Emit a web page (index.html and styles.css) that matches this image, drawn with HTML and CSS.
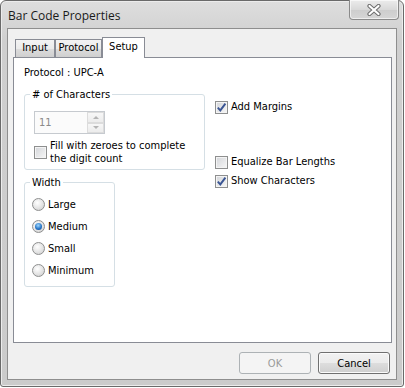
FILE: index.html
```html
<!DOCTYPE html>
<html lang="en">
<head>
  <meta charset="UTF-8">
  <title>Bar Code Properties</title>
  <link rel="stylesheet" href="styles.css">
</head>
<body>

<div class="window">
  <!-- タイトルバー -->
  <div class="titlebar">
    <span class="title">Bar Code Properties</span>
    <button type="button" class="close">
      <svg width="14" height="12" viewBox="0 0 14 12">
        <path d="M2.5 2 L11.5 10 M11.5 2 L2.5 10" stroke="#6d6d6d" stroke-width="4.2" stroke-linecap="round"/>
        <path d="M2.5 2 L11.5 10 M11.5 2 L2.5 10" stroke="#ffffff" stroke-width="2.2" stroke-linecap="round"/>
      </svg>
    </button>
  </div>

  <div class="client">
    <!-- タブ -->
    <div class="tabs">
      <div class="tab tab-input">Input</div>
      <div class="tab tab-protocol">Protocol</div>
      <div class="tab tab-setup active">Setup</div>
    </div>

    <div class="panel">
      <div class="protocol">Protocol : UPC-A</div>

      <div class="col-left">
        <fieldset class="group group-chars">
          <legend># of Characters</legend>
          <div class="spin">
            <span class="spin-value">11</span>
            <span class="spin-btns">
              <span class="spin-btn"><span class="arrow up"></span></span>
              <span class="spin-btn"><span class="arrow down"></span></span>
            </span>
          </div>
          <label class="check check-fill">
            <span class="box"></span>
            <span>Fill with zeroes to complete<br>the digit count</span>
          </label>
        </fieldset>

        <fieldset class="group group-width">
          <legend>Width</legend>
          <label class="radio"><span class="dot"></span>Large</label>
          <label class="radio"><span class="dot on"></span>Medium</label>
          <label class="radio"><span class="dot"></span>Small</label>
          <label class="radio"><span class="dot"></span>Minimum</label>
        </fieldset>
      </div>

      <div class="col-right">
        <label class="check row-margins">
          <span class="box checked"><svg width="11" height="11" viewBox="0 0 11 11"><path d="M1.8 5.6 L4.3 8.4 L9.4 1.6" fill="none" stroke="#3a5594" stroke-width="1.9"/></svg></span>
          Add Margins
        </label>
        <label class="check row-equalize">
          <span class="box"></span>
          Equalize Bar Lengths
        </label>
        <label class="check row-show">
          <span class="box checked"><svg width="11" height="11" viewBox="0 0 11 11"><path d="M1.8 5.6 L4.3 8.4 L9.4 1.6" fill="none" stroke="#3a5594" stroke-width="1.9"/></svg></span>
          Show Characters
        </label>
      </div>
    </div>

    <!-- ボタン -->
    <div class="actions">
      <button type="button" class="btn" disabled>OK</button>
      <button type="button" class="btn">Cancel</button>
    </div>
  </div>
</div>

</body>
</html>
```

FILE: styles.css
```css
/* 共通 */
body {
  margin: 0;
  background: #ffffff;
  font-family: "DejaVu Sans Condensed", "DejaVu Sans", sans-serif;
  font-stretch: condensed;
  font-size: 11px;
  color: #000000;
}

.window {
  width: 404px;
  height: 387px;
  box-sizing: border-box;
  border: 1px solid #6a6a6a;
  border-radius: 6px 6px 3px 3px;
  padding: 0 6px 6px;
  background: linear-gradient(#dedede, #cfcfcf 40px, #cbcbcb);
  box-shadow: inset 0 0 0 1px #ececec;
  display: flex;
  flex-direction: column;
}

/* タイトルバー */
.titlebar {
  height: 27px;
  margin: 0 -6px;
  display: flex;
  align-items: flex-start;
}

.title {
  font-family: "Open Sans", sans-serif;
  font-stretch: normal;
  font-size: 12px;
  line-height: 16px;
  padding: 7px 0 0 7px;
  color: #1a1a1a;
}

.close {
  margin: -1px 4px 0 auto;
  width: 50px;
  height: 20px;
  padding: 0;
  border: 1px solid #8a8a8a;
  border-top: none;
  border-radius: 0 0 4px 4px;
  background: linear-gradient(#ececec, #d9d9d9 50%, #cdcdcd 51%, #d6d6d6);
  box-shadow: inset 0 0 0 1px rgba(255, 255, 255, 0.6);
  display: flex;
  align-items: center;
  justify-content: center;
}

.client {
  flex: 1;
  border: 1px solid #8e8e8e;
  background: #f0f0f0;
  padding: 8px 4px 5px 5px;
  display: flex;
  flex-direction: column;
}

/* タブ */
.tabs {
  display: flex;
  align-items: flex-end;
  padding-left: 2px;
  height: 20px;
}

.tab {
  box-sizing: border-box;
  height: 18px;
  line-height: 16px;
  text-align: center;
  border: 1px solid #898c95;
  border-bottom: none;
  background: linear-gradient(#f3f3f3, #ebebeb 50%, #dddddd 51%, #cfcfcf);
}

.tab-input { width: 40px; }
.tab-protocol { width: 47px; }
.tab-setup { width: 43px; }

.tab.active {
  height: 21px;
  line-height: 18px;
  margin-bottom: -1px;
  background: #ffffff;
  position: relative;
  z-index: 1;
}

.panel {
  height: 286px;
  box-sizing: border-box;
  border: 1px solid #898c95;
  background: #ffffff;
  padding: 8px 10px 0;
  display: grid;
  grid-template-columns: 181px 1fr;
  grid-template-rows: 14px auto;
  column-gap: 10px;
  row-gap: 8px;
  align-content: start;
}

.protocol {
  grid-column: 1 / 3;
  line-height: 14px;
}

/* グループボックス */
.group {
  margin: 0;
  border: 1px solid #d5dfe5;
  border-radius: 3px;
  min-width: 0;
}

.group legend {
  padding: 0 2px;
  line-height: 13px;
}

.group-chars {
  padding: 10px 9px 4px;
}

.group-chars legend {
  margin-left: -4px;
}

.group-width {
  width: 91px;
  box-sizing: border-box;
  margin-top: 6px;
  padding: 4px 7px 5px;
}

.group-width legend {
  margin-left: -2px;
}

/* スピンボックス */
.spin {
  width: 71px;
  height: 23px;
  box-sizing: border-box;
  border: 1px solid #c6cacf;
  background: #fbfbfb;
  display: flex;
  justify-content: space-between;
}

.spin-value {
  padding-left: 4px;
  line-height: 21px;
  color: #8a8a8a;
}

.spin-btns {
  width: 17px;
  display: flex;
  flex-direction: column;
}

.spin-btn {
  flex: 1;
  border: 1px solid #dcdcdc;
  background: linear-gradient(#f7f7f7, #ececec);
  display: flex;
  align-items: center;
  justify-content: center;
}

.arrow {
  width: 0;
  height: 0;
  border-left: 3px solid transparent;
  border-right: 3px solid transparent;
}

.arrow.up { border-bottom: 3px solid #b4b4b4; }
.arrow.down { border-top: 3px solid #b4b4b4; }

/* チェックボックス */
.check {
  display: flex;
  align-items: center;
  gap: 3px;
  line-height: 14px;
}

.check-fill {
  margin-top: 5px;
  line-height: 13px;
}

.box {
  flex: none;
  width: 13px;
  height: 13px;
  box-sizing: border-box;
  border: 1px solid #8e8f8f;
  background: linear-gradient(135deg, #d3d5d9, #f7f7f7);
  box-shadow: inset 0 0 0 1px #f4f4f4;
  display: flex;
  align-items: center;
  justify-content: center;
}

.col-right {
  display: flex;
  flex-direction: column;
}

.row-margins { margin-top: 12px; }
.row-equalize { margin-top: 41px; }
.row-show { margin-top: 5px; }

/* ラジオボタン */
.radio {
  display: flex;
  align-items: center;
  gap: 3px;
  height: 22px;
}

.dot {
  flex: none;
  width: 13px;
  height: 13px;
  box-sizing: border-box;
  border: 1px solid #8e8f8f;
  border-radius: 50%;
  background: radial-gradient(circle at 40% 35%, #ffffff, #e3e3e3 55%, #c9c9c9);
  display: flex;
  align-items: center;
  justify-content: center;
}

.dot.on::after {
  content: "";
  width: 7px;
  height: 7px;
  border-radius: 50%;
  background: radial-gradient(circle at 45% 35%, #9fd8ff, #2a78c8 55%, #0d3f86);
}

/* ボタン */
.actions {
  margin-top: 9px;
  display: flex;
  justify-content: flex-end;
  gap: 7px;
  padding-right: 2px;
}

.btn {
  width: 72px;
  height: 22px;
  padding: 0;
  font-family: inherit;
  font-stretch: condensed;
  font-size: 11px;
  color: #000000;
  border: 1px solid #707070;
  border-radius: 3px;
  background: linear-gradient(#f2f2f2, #ebebeb 50%, #dddddd 51%, #cfcfcf);
  box-shadow: inset 0 0 0 1px #fbfbfb;
}

.btn:disabled {
  color: #9a9a9a;
  border-color: #adb2b5;
  background: #f4f4f4;
  box-shadow: none;
}
```
